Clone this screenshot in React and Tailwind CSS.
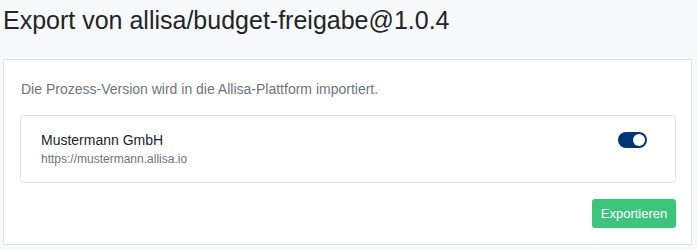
import React, { useState } from 'react';

const Toggle = ({ checked, onChange }) => (
  <button
    type="button"
    role="switch"
    aria-checked={checked}
    onClick={() => onChange(!checked)}
    className={`flex items-center w-[29px] h-[16px] rounded-full px-[2px] ${
      checked ? 'bg-[#003671] justify-end' : 'bg-[#dee2e6] justify-start'
    }`}
  >
    <span className="block w-[12px] h-[12px] rounded-full bg-white" />
  </button>
);

const App = () => {
  const [enabled, setEnabled] = useState(true);

  return (
    <div className="min-h-[249px] bg-[#f8f9fa] pl-[3px] pr-[5px] pt-[5px] font-['Liberation_Sans',Arial,sans-serif]">
      <h1 className="text-[25px] leading-[31px] text-[#212529] mb-[23px]">
        Export von allisa/budget-freigabe@1.0.4
      </h1>

      <div className="bg-white border border-[#dee2e6] h-[186px] pl-[16px] pr-[15px] pt-[19px]">
        <p className="pl-[1px] text-[14px] leading-[20px] text-[#6c757d]">
          Die Prozess-Version wird in die Allisa-Plattform importiert.
        </p>

        <div className="mt-[16px] border border-[#dee2e6] rounded-[4px] h-[68px] flex justify-between pl-[20px] pr-[28px] pt-[14px]">
          <div>
            <div className="text-[14px] leading-[20px] text-[#212529]">Mustermann GmbH</div>
            <div className="text-[12px] leading-[16px] text-[#6c757d] mt-[1px]">
              https://mustermann.allisa.io
            </div>
          </div>
          <div className="pt-[2px]">
            <Toggle checked={enabled} onChange={setEnabled} />
          </div>
        </div>

        <div className="flex justify-end mt-[16px]">
          <button
            type="button"
            className="h-[29px] w-[84px] rounded-[3px] bg-[#3cc47c] text-white text-[13px] leading-[20px]"
          >
            Exportieren
          </button>
        </div>
      </div>
    </div>
  );
};

export default App;
